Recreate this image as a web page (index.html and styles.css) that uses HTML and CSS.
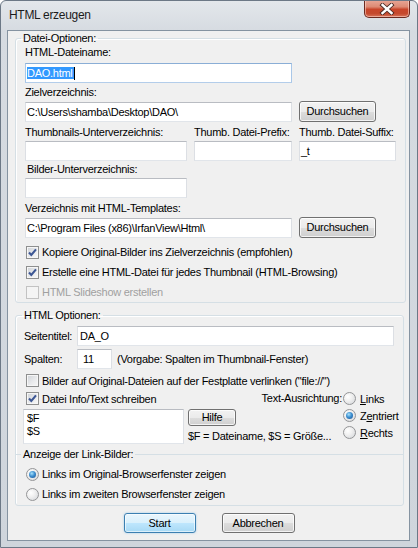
FILE: index.html
```html
<!DOCTYPE html>
<html>
<head>
<meta charset="utf-8">
<link rel="stylesheet" href="styles.css">
</head>
<body>
<div class="window">
  <div class="titlebar">
    <span class="title">HTML erzeugen</span>
    <div class="close">
      <svg width="16" height="12" viewBox="0 0 16 12">
        <path d="M3.5 2 L12.5 10 M12.5 2 L3.5 10" stroke="#4a2a25" stroke-width="4.2" stroke-linecap="square"/>
        <path d="M3.5 2 L12.5 10 M12.5 2 L3.5 10" stroke="#ffffff" stroke-width="2.4" stroke-linecap="square"/>
      </svg>
    </div>
  </div>
  <div class="client">
    <fieldset class="group g1">
      <legend>Datei-Optionen:</legend>
      <div class="lbl first">HTML-Dateiname:</div>
      <div class="tb focus w-main"><span class="sel">DAO.html</span><span class="caret"></span></div>
      <div class="lbl">Zielverzeichnis:</div>
      <div class="browse-row">
        <div class="tb w-main">C:\Users\shamba\Desktop\DAO\</div>
        <div class="btn">Durchsuchen</div>
      </div>
      <div class="grid3 lbls">
        <div>Thumbnails-Unterverzeichnis:</div>
        <div>Thumb. Datei-Prefix:</div>
        <div>Thumb. Datei-Suffix:</div>
      </div>
      <div class="grid3 tbs">
        <div class="tb"></div>
        <div class="tb"></div>
        <div class="tb">_t</div>
      </div>
      <div class="lbl bilder">Bilder-Unterverzeichnis:</div>
      <div class="tb w-small"></div>
      <div class="lbl tpl">Verzeichnis mit HTML-Templates:</div>
      <div class="browse-row">
        <div class="tb w-main">C:\Program Files (x86)\IrfanView\Html\</div>
        <div class="btn">Durchsuchen</div>
      </div>
      <div class="chk-list">
        <div class="chk-row"><span class="chk"><svg width="11" height="11" viewBox="0 0 11 11"><path d="M2 5.5 L4.3 8 L9 2.3" fill="none" stroke="#3d5794" stroke-width="2.1"/></svg></span>Kopiere Original-Bilder ins Zielverzeichnis (empfohlen)</div>
        <div class="chk-row"><span class="chk"><svg width="11" height="11" viewBox="0 0 11 11"><path d="M2 5.5 L4.3 8 L9 2.3" fill="none" stroke="#3d5794" stroke-width="2.1"/></svg></span>Erstelle eine HTML-Datei für jedes Thumbnail (HTML-Browsing)</div>
        <div class="chk-row disabled"><span class="chk off"></span>HTML Slideshow erstellen</div>
      </div>
    </fieldset>

    <fieldset class="group g2">
      <legend>HTML Optionen:</legend>
      <div class="field-row first">
        <span class="fl">Seitentitel:</span>
        <div class="tb grow">DA_O</div>
      </div>
      <div class="field-row">
        <span class="fl">Spalten:</span>
        <div class="tb w-num">11</div>
        <span class="hint">(Vorgabe: Spalten im Thumbnail-Fenster)</span>
      </div>
      <div class="chk-row r19"><span class="chk"></span>Bilder auf Original-Dateien auf der Festplatte verlinken ("file://")</div>
      <div class="info-grid">
        <div class="chk-row r17"><span class="chk"><svg width="11" height="11" viewBox="0 0 11 11"><path d="M2 5.5 L4.3 8 L9 2.3" fill="none" stroke="#3d5794" stroke-width="2.1"/></svg></span>Datei Info/Text schreiben</div>
        <div class="align-lbl">Text-Ausrichtung:</div>
        <div class="rad-row r17"><span class="rad"></span><span><u>L</u>inks</span></div>
        <div class="ta">$F<br>$S</div>
        <div class="mid">
          <div class="btn small">Hilfe</div>
          <div class="caption">$F = Dateiname, $S = Größe...</div>
        </div>
        <div class="radcol">
          <div class="rad-row r17"><span class="rad on"><span class="dot"></span></span><span>Z<u>e</u>ntriert</span></div>
          <div class="rad-row r17"><span class="rad"></span><span><u>R</u>echts</span></div>
        </div>
      </div>
      <fieldset class="inner">
        <legend>Anzeige der Link-Bilder:</legend>
        <div class="rad-row r20 first"><span class="rad on"><span class="dot"></span></span><span>Links im Original-Browserfenster zeigen</span></div>
        <div class="rad-row r20"><span class="rad"></span><span>Links im zweiten Browserfenster zeigen</span></div>
      </fieldset>
    </fieldset>

    <div class="buttons">
      <div class="btn default">Start</div>
      <div class="btn">Abbrechen</div>
    </div>
  </div>
</div>
</body>
</html>
```

FILE: styles.css
```css
html, body {
  margin: 0;
  padding: 0;
  background: #ffffff;
}

body {
  font-family: "Liberation Sans", Arial, sans-serif;
  font-size: 11px;
  letter-spacing: -0.27px;
  color: #000;
}

.window {
  width: 418px;
  height: 548px;
  box-sizing: border-box;
  border: 1px solid #6c7886;
  border-radius: 6px 6px 0 0;
  background: linear-gradient(to bottom, #e3e7eb 0px, #d6dbe1 30px, #cfd5dc 100%);
  display: flex;
  flex-direction: column;
  overflow: hidden;
}

.titlebar {
  height: 29px;
  flex: none;
  display: flex;
  justify-content: space-between;
  align-items: flex-start;
  padding-right: 7px;
}

.title {
  font-size: 12px;
  letter-spacing: -0.3px;
  line-height: 15px;
  padding: 7px 0 0 8px;
  color: #1b1b1b;
}

.close {
  width: 44px;
  height: 17px;
  margin-top: -1px;
  border: 1px solid #6b2a20;
  border-top: none;
  border-radius: 0 0 5px 5px;
  background: linear-gradient(to bottom, #e8a898 0%, #dd8a74 40%, #c8452a 55%, #c54a2e 80%, #d8735a 100%);
  box-shadow: inset 0 0 0 1px rgba(255, 220, 210, 0.55);
  display: flex;
  align-items: center;
  justify-content: center;
}

.close svg {
  display: block;
  margin-top: 1px;
}

.client {
  flex: 1;
  margin: 0 7px 6px 6px;
  border: 1px solid #8593a1;
  background: #f0f0f0;
  display: flex;
  flex-direction: column;
}

/* group boxes */
.group {
  margin: 0 5px 0 7px;
  border: 1px solid #d5dfe5;
  border-radius: 3px;
  padding: 0 9px 0 9px;
  box-shadow: inset 1px 1px 0 #fff;
}

.group legend {
  padding: 0 2px;
  margin-left: -4px;
  line-height: 13px;
}

.g1 {
  margin-top: 1px;
}

.g2 {
  margin-top: 6px;
  padding-bottom: 1px;
}

.g2 > legend {
  margin-left: -3px;
}

.lbl {
  line-height: 13px;
  margin-top: 3px;
}

.lbl.first {
  margin-top: 1px;
}

.lbl.bilder {
  margin-top: 2px;
  padding-left: 2px;
}

.lbl.tpl {
  margin-top: 4px;
}

/* textbox */
.tb {
  box-sizing: border-box;
  height: 20px;
  background: #fff;
  border: 1px solid;
  border-color: #b9bcc2 #dcdfe4 #e1e5ea #dcdfe4;
  padding-left: 1px;
  line-height: 18px;
  white-space: nowrap;
  overflow: hidden;
}

.tb.focus {
  border-color: #8aaed6 #a9c7e8 #b3cdea #a9c7e8;
  margin-top: 4px;
  display: flex;
  align-items: center;
}

.sel {
  background: #3399ff;
  color: #fff;
  line-height: 12px;
  padding-right: 1px;
}

.caret {
  width: 1px;
  height: 13px;
  background: #000;
}

.w-main {
  width: 267px;
}

.w-small {
  width: 162px;
  margin-top: 2px;
}

.browse-row {
  display: flex;
  align-items: center;
  gap: 7px;
  height: 21px;
  margin-top: 2px;
}

/* buttons */
.btn {
  box-sizing: border-box;
  height: 21px;
  width: 77px;
  border: 1px solid #707070;
  border-radius: 3px;
  background: linear-gradient(to bottom, #f2f2f2 0%, #ebebeb 50%, #dddddd 51%, #cfcfcf 100%);
  box-shadow: inset 0 0 0 1px rgba(255, 255, 255, 0.75);
  display: flex;
  align-items: center;
  justify-content: center;
  line-height: 13px;
}

.btn.small {
  width: 48px;
  height: 17px;
  margin-top: 2px;
}

.btn.default {
  border-color: #3c7fb1;
  background: linear-gradient(to bottom, #eaf6fd 0%, #d9f0fc 50%, #bee6fd 51%, #a7d9f5 100%);
  box-shadow: inset 0 0 0 1px rgba(255, 255, 255, 0.6), 0 0 2px rgba(60, 160, 230, 0.5);
}

.grid3 {
  display: grid;
  grid-template-columns: 162px 98px 97px;
  column-gap: 7px;
}

.grid3.lbls {
  margin-top: 4px;
  line-height: 13px;
  white-space: nowrap;
}

.grid3.tbs {
  margin-top: 2px;
}

/* checkboxes */
.chk-list {
  margin-top: 4px;
}

.chk-row {
  display: flex;
  align-items: center;
  height: 20px;
  gap: 3px;
  white-space: nowrap;
}

.chk-row.r19 {
  height: 19px;
  margin-top: 2px;
}

.chk-row.r17,
.rad-row.r17 {
  height: 17px;
}

.chk {
  box-sizing: border-box;
  width: 13px;
  height: 13px;
  margin-left: 1px;
  border: 1px solid #8e8f8f;
  background: linear-gradient(135deg, #cdd1d6 0%, #e9eaec 55%, #f8f8f8 100%);
  box-shadow: inset 0 0 0 1px #f6f6f6;
  display: flex;
  align-items: center;
  justify-content: center;
  flex: none;
}

.chk svg {
  display: block;
}

.chk.off {
  border-color: #c2c2c2;
  background: #f4f4f4;
  box-shadow: none;
}

.disabled {
  color: #a0a0a0;
}

/* html options */
.field-row {
  display: flex;
  align-items: center;
  height: 20px;
  margin-top: 3px;
}

.field-row.first {
  margin-top: 4px;
}

.fl {
  width: 53px;
  margin-left: -1px;
  flex: none;
}

.grow {
  flex: 1;
  padding-left: 2px;
}

.w-num {
  width: 35px;
  padding-left: 5px;
}

.hint {
  margin-left: 5px;
  white-space: nowrap;
}

.info-grid {
  display: grid;
  grid-template-columns: 163px 155px 50px;
  grid-template-rows: 17px auto;
}

.align-lbl {
  text-align: right;
  padding-right: 1px;
  line-height: 17px;
  white-space: nowrap;
}

.rad-row {
  display: flex;
  align-items: center;
  gap: 3px;
  white-space: nowrap;
}

.radcol .rad-row,
.info-grid > .rad-row {
  gap: 4px;
}

.rad {
  box-sizing: border-box;
  width: 13px;
  height: 13px;
  border-radius: 50%;
  border: 1px solid #949597;
  background: radial-gradient(circle at 35% 35%, #ffffff 0%, #f0f0f0 40%, #d1d4d8 100%);
  display: flex;
  align-items: center;
  justify-content: center;
  flex: none;
}

.rad .dot {
  width: 7px;
  height: 7px;
  border-radius: 50%;
  background: radial-gradient(circle at 40% 35%, #a8e2fb 0%, #3d8fd0 45%, #174f8f 100%);
}

.ta {
  box-sizing: border-box;
  width: 161px;
  height: 35px;
  margin: 2px 0 0 -2px;
  background: #fff;
  border: 1px solid;
  border-color: #b9bcc2 #dcdfe4 #e1e5ea #dcdfe4;
  padding: 2px 0 0 3px;
  line-height: 13px;
}

.mid {
  display: flex;
  flex-direction: column;
}

.caption {
  margin-top: 4px;
  line-height: 13px;
  white-space: nowrap;
}

.inner {
  margin: 4px -9px 0 -9px;
  border: none;
  border-top: 1px solid #d5dfe5;
  padding: 0 9px 0 9px;
}

.inner legend {
  padding: 0 2px;
  margin-left: -4px;
  line-height: 13px;
}

.rad-row.r20 {
  height: 20px;
  margin-left: 1px;
}

.rad-row.r20.first {
  margin-top: 3px;
}

.buttons {
  display: flex;
  justify-content: center;
  gap: 26px;
  margin-top: 7px;
  padding-left: 1px;
}

.buttons .btn {
  height: 20px;
  width: 73px;
}

.buttons .btn.default {
  width: 72px;
}
```
